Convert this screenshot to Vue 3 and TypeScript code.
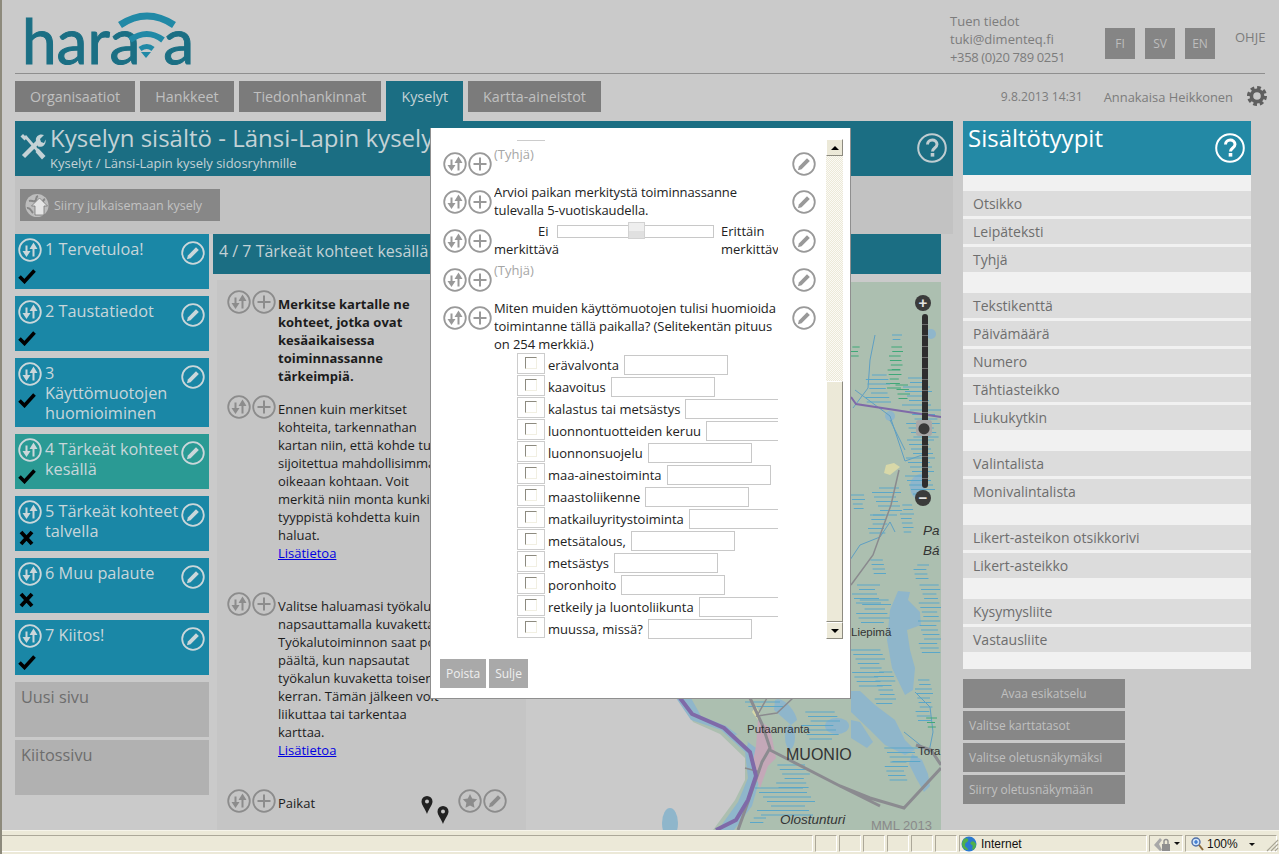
<script setup lang="ts">
interface Page {
  title: string
  done: boolean
  active?: boolean
}

interface Option {
  label: string
}

const tabs = ['Organisaatiot', 'Hankkeet', 'Tiedonhankinnat', 'Kyselyt', 'Kartta-aineistot']
const langs = ['FI', 'SV', 'EN']

const pages: Page[] = [
  { title: '1 Tervetuloa!', done: true },
  { title: '2 Taustatiedot', done: true },
  { title: '3 Käyttömuotojen huomioiminen', done: true },
  { title: '4 Tärkeät kohteet kesällä', done: true, active: true },
  { title: '5 Tärkeät kohteet talvella', done: false },
  { title: '6 Muu palaute', done: false },
  { title: '7 Kiitos!', done: true },
]

const typeGroups = [
  ['Otsikko', 'Leipäteksti', 'Tyhjä'],
  ['Tekstikenttä', 'Päivämäärä', 'Numero', 'Tähtiasteikko', 'Liukukytkin'],
  ['Valintalista', 'Monivalintalista'],
  ['Likert-asteikon otsikkorivi', 'Likert-asteikko'],
  ['Kysymysliite', 'Vastausliite'],
]

const sideButtons = ['Valitse karttatasot', 'Valitse oletusnäkymäksi', 'Siirry oletusnäkymään']

const options: Option[] = [
  'erävalvonta',
  'kaavoitus',
  'kalastus tai metsästys',
  'luonnontuotteiden keruu',
  'luonnonsuojelu',
  'maa-ainestoiminta',
  'maastoliikenne',
  'matkailuyritystoiminta',
  'metsätalous,',
  'metsästys',
  'poronhoito',
  'retkeily ja luontoliikunta',
  'muussa, missä?',
].map((label) => ({ label }))

// wetland hatching on the map: x, y, width, height, colour
const clusters: [number, number, number, number, string][] = [
  [892, 335, 10, 6, '#5aa7c9'],
  [850, 347, 10, 12, '#3fa878'],
  [889, 347, 14, 26, '#3fa878'],
  [886, 370, 16, 20, '#3fa878'],
  [895, 385, 15, 14, '#3fa878'],
  [865, 375, 26, 28, '#5aa7c9'],
  [902, 378, 30, 30, '#5aa7c9'],
  [905, 410, 36, 30, '#5aa7c9'],
  [905, 440, 30, 56, '#5aa7c9'],
  [851, 495, 14, 16, '#5aa7c9'],
  [872, 488, 30, 30, '#5aa7c9'],
  [900, 505, 14, 28, '#5aa7c9'],
  [868, 515, 20, 22, '#5aa7c9'],
  [870, 560, 16, 16, '#5aa7c9'],
  [913, 565, 16, 14, '#5aa7c9'],
  [851, 585, 30, 20, '#5aa7c9'],
  [855, 600, 36, 26, '#5aa7c9'],
  [918, 585, 23, 70, '#5aa7c9'],
  [851, 650, 34, 40, '#5aa7c9'],
  [874, 672, 22, 34, '#5aa7c9'],
  [915, 680, 18, 44, '#5aa7c9'],
  [925, 718, 12, 10, '#3fa878'],
  [883, 748, 40, 14, '#5aa7c9'],
  [884, 762, 24, 20, '#5aa7c9'],
  [735, 702, 50, 6, '#5aa7c9'],
  [800, 712, 40, 28, '#5aa7c9'],
  [775, 765, 36, 24, '#5aa7c9'],
  [755, 788, 60, 28, '#5aa7c9'],
  [750, 818, 16, 8, '#5aa7c9'],
]

const hatches = clusters.flatMap(([x, y, w, h, colour], c) => {
  const lines = []
  for (let i = 0; i * 4.5 < h; i++) {
    const inset = ((c * 7 + i * 11) % 9) * (w / 30)
    lines.push({ x1: x + inset, x2: x + w - ((c + i * 5) % 7) * (w / 30), y: y + i * 4.5, colour })
  }
  return lines
})
</script>

<template>
  <div class="window">
    <svg class="defs" width="0" height="0" aria-hidden="true">
      <symbol id="ic-move" viewBox="0 0 24 24">
        <circle cx="12" cy="12" r="10.8" fill="none" stroke="currentColor" stroke-width="1.8" />
        <path d="M8.5 7.500v7M15.500 10v8.500" stroke="currentColor" stroke-width="2" />
        <path d="M4.500 13h8l-4 6zM11.500 11h8l-4-6.500z" fill="currentColor" />
      </symbol>
      <symbol id="ic-plus" viewBox="0 0 24 24">
        <circle cx="12" cy="12" r="10.8" fill="none" stroke="currentColor" stroke-width="1.8" />
        <path d="M12 5.500v13M5.500 12h13" stroke="currentColor" stroke-width="2" />
      </symbol>
      <symbol id="ic-edit" viewBox="0 0 24 24">
        <circle cx="12" cy="12" r="10.8" fill="none" stroke="currentColor" stroke-width="1.8" />
        <path d="M15 6.200l2.800 2.800L9.600 17.200l-3.700 1 1-3.800z" fill="currentColor" />
      </symbol>
      <symbol id="ic-star" viewBox="0 0 24 24">
        <circle cx="12" cy="12" r="10.8" fill="none" stroke="currentColor" stroke-width="1.8" />
        <path d="M12 5l2.200 4.600 5 .7-3.600 3.500.9 5L12 16.400l-4.500 2.400.9-5-3.600-3.500 5-.7z" fill="currentColor" />
      </symbol>
      <symbol id="ic-help" viewBox="0 0 30 30">
        <circle cx="15" cy="15" r="13.800" fill="none" stroke="currentColor" stroke-width="2" />
        <path d="M10.500 11.500c0-6 9.500-6 9.500-.2 0 3.700-4.500 3.700-4.500 7.200" fill="none" stroke="currentColor" stroke-width="3" />
        <rect x="13.700" y="20" width="3.600" height="3.600" fill="currentColor" />
      </symbol>
      <symbol id="ic-pin" viewBox="0 0 12 18">
        <path fill-rule="evenodd" d="M6 0a5.500 5.500 0 0 1 5.500 5.500C11.500 9 8 12.500 6 18 4 12.500.5 9 .5 5.500A5.500 5.500 0 0 1 6 0zm0 3.500a2 2 0 1 0 0 4 2 2 0 0 0 0-4z" fill="currentColor" />
      </symbol>
    </svg>

    <div class="main">
      <header class="top">
        <div class="logo">
          <span class="logo-text">hara<span class="logo-gap" />a</span>
          <svg class="logo-wifi" width="62" height="48" viewBox="0 0 62 48">
            <g fill="none" stroke="#2189a6">
              <path d="M4 14Q31-4 58 14" stroke-width="7" />
              <path d="M14 29Q31 17 47 29" stroke-width="6" />
              <path d="M24 38Q31 33 37 38" stroke-width="5" />
            </g>
            <path d="M25 41h10l-5 6z" fill="#2189a6" />
          </svg>
        </div>
        <div class="support">
          <div>Tuen tiedot</div>
          <div>tuki@dimenteq.fi</div>
          <div class="phone">+358 (0)20 789 0251</div>
        </div>
        <div class="langs">
          <span v-for="lang in langs" :key="lang" class="lang">{{ lang }}</span>
        </div>
        <span class="help-link">OHJE</span>
      </header>

      <nav class="nav">
        <span
          v-for="tab in tabs"
          :key="tab"
          class="tab"
          :class="{ current: tab === 'Kyselyt' }"
        >{{ tab }}</span>
        <span class="stamp">9.8.2013 14:31</span>
        <span class="user">Annakaisa Heikkonen</span>
        <svg class="gear" width="20" height="20" viewBox="0 0 20 20">
          <circle cx="10" cy="10" r="8.300" fill="none" stroke="#5f5f5f" stroke-width="3.400" stroke-dasharray="3.700 2.800" />
          <circle cx="10" cy="10" r="5.600" fill="none" stroke="#5f5f5f" stroke-width="3.600" />
        </svg>
      </nav>

      <div class="columns">
        <section class="editor">
          <div class="title-bar">
            <svg class="tools-icon" width="26" height="27" viewBox="0 0 26 27">
              <path d="M5 3l13 15" stroke="#c4d2d6" stroke-width="2.800" />
              <path d="M15.500 19l3-3.500 7 7.500-3.500 3.500z" fill="#c4d2d6" />
              <path d="M3.500 23.500L19 8" stroke="#c4d2d6" stroke-width="4.500" />
              <path d="M16 8c-1-4 3-8 8-6l-4 4 1 3 3 1 1.500-3.500c1 5-3 8.500-7.500 7z" fill="#c4d2d6" />
              <path d="M0.500 3.500L3 1l4 4-2.500 2.500z" fill="#c4d2d6" />
            </svg>
            <div class="title-text">
              <h1>Kyselyn sisältö - Länsi-Lapin kysely sidosryhmille</h1>
              <div class="crumb">Kyselyt / Länsi-Lapin kysely sidosryhmille</div>
            </div>
            <svg class="help-icon dim" width="30" height="30"><use href="#ic-help" /></svg>
          </div>

          <div class="publish-strip">
            <button class="publish" type="button">
              <svg width="24" height="25" viewBox="0 0 24 25">
                <circle cx="12" cy="12.500" r="11.500" fill="#bdbdbd" />
                <path d="M4 8c3-1 4 1 6 0s0-4 3-5M2 15c3-1 4 3 6 5M20 6c-2 1-3 3-1 5" fill="none" stroke="#878787" stroke-width="2" />
                <path d="M14.500 5l8 8h-3.500v9h-9v-9H6.500z" fill="#e4e4e4" stroke="#777" stroke-width=".8" />
              </svg>
              Siirry julkaisemaan kysely
            </button>
          </div>

          <div class="work">
            <aside class="pages">
              <div
                v-for="page in pages"
                :key="page.title"
                class="page"
                :class="{ active: page.active }"
              >
                <div class="page-side">
                  <svg class="ico" width="24" height="24"><use href="#ic-move" /></svg>
                  <svg v-if="page.done" class="mark" width="18" height="16" viewBox="0 0 18 16">
                    <path d="M1.500 8.500l5 5L16.500 2.500" fill="none" stroke="#000" stroke-width="3.600" />
                  </svg>
                  <svg v-else class="mark" width="18" height="16" viewBox="0 0 18 16">
                    <path d="M3 2l11 12M14 2L3 14" fill="none" stroke="#000" stroke-width="3.800" />
                  </svg>
                </div>
                <div class="page-title">{{ page.title }}</div>
                <svg class="ico page-edit" width="24" height="24"><use href="#ic-edit" /></svg>
              </div>
              <div class="page blank">Uusi sivu</div>
              <div class="page blank">Kiitossivu</div>
            </aside>

            <div class="page-view">
              <div class="page-head">4 / 7 Tärkeät kohteet kesällä</div>
              <div class="page-body">
                <div class="blocks">
                  <div class="block first">
                    <div class="tools">
                      <svg width="24" height="24"><use href="#ic-move" /></svg>
                      <svg width="24" height="24"><use href="#ic-plus" /></svg>
                    </div>
                    <div class="copy strong">Merkitse kartalle ne kohteet, jotka ovat kesäaikaisessa toiminnassanne tärkeimpiä.</div>
                  </div>
                  <div class="block second">
                    <div class="tools">
                      <svg width="24" height="24"><use href="#ic-move" /></svg>
                      <svg width="24" height="24"><use href="#ic-plus" /></svg>
                    </div>
                    <div class="copy">
                      Ennen kuin merkitset kohteita, tarkennathan kartan niin, että kohde tulee sijoitettua mahdollisimman oikeaan kohtaan. Voit merkitä niin monta kunkin tyyppistä kohdetta kuin haluat.
                      <a href="#">Lisätietoa</a>
                    </div>
                  </div>
                  <div class="block third">
                    <div class="tools">
                      <svg width="24" height="24"><use href="#ic-move" /></svg>
                      <svg width="24" height="24"><use href="#ic-plus" /></svg>
                    </div>
                    <div class="copy">
                      Valitse haluamasi työkalu napsauttamalla kuvaketta. Työkalutoiminnon saat pois päältä, kun napsautat työkalun kuvaketta toisen kerran. Tämän jälkeen voit liikuttaa tai tarkentaa karttaa.
                      <a href="#">Lisätietoa</a>
                    </div>
                  </div>
                  <div class="block places">
                    <div class="tools">
                      <svg width="24" height="24"><use href="#ic-move" /></svg>
                      <svg width="24" height="24"><use href="#ic-plus" /></svg>
                    </div>
                    <div class="place-label">Paikat</div>
                    <svg class="pin" width="12" height="18"><use href="#ic-pin" /></svg>
                    <svg class="pin low" width="12" height="18"><use href="#ic-pin" /></svg>
                    <svg class="place-tool" width="24" height="24"><use href="#ic-star" /></svg>
                    <svg class="place-tool" width="24" height="24"><use href="#ic-edit" /></svg>
                  </div>
                </div>

                <div class="map">
                  <svg width="415" height="548" viewBox="526 282 415 548">
                    <rect x="526" y="282" width="415" height="548" fill="#cacaca" />
                    <path d="M670 282H941V830H713l22-30 10-20v-22l-25-24-27-12-15-30z" fill="#acbfb0" />
                    <!-- rivers and lakes -->
                    <path d="M676 698l15 22 30 10 24 22 3 26-10 24-20 28h16l18-24 8-28-4-30-30-22-25-10-10-18z" fill="#8fb6cb" />
                    <path d="M898 591l12 1-2 8 12 12 1 13-14 5 3 20 5 18-2 22-8 5-13-27-5-28 3-30z" fill="#8fb6cb" />
                    <path d="M851 691h9l15 14 20 15 10 20 10 10-10 5-20-10-15-15-19-18z" fill="#8fb6cb" />
                    <path d="M851 720l9 2 13 20-6 6-16-10z" fill="#8fb6cb" />
                    <path d="M912 754l10 6 6 14 2 12-6 6-8-14-7-14z" fill="#8fb6cb" />
                    <path d="M910 486c0-10 10-13 15-13v29c-8 0-15-6-15-16z" fill="#8fb6cb" />
                    <circle cx="890" cy="416" r="5" fill="#8fb6cb" />
                    <circle cx="931" cy="334" r="5" fill="#8fb6cb" />
                    <ellipse cx="670" cy="823" rx="8" ry="15" fill="#8fb6cb" />
                    <ellipse cx="837" cy="726" rx="12" ry="8" fill="#8fb6cb" />
                    <ellipse cx="790" cy="737" rx="5" ry="12" fill="#8fb6cb" />
                    <path d="M775 700c8-4 20 10 22 20l-6 5-17-15z" fill="#8fb6cb" />
                    <path d="M735 735l6 10 5 4 2-6-6-10z" fill="#acbfb0" />
                    <g fill="none" stroke="#5f9fc3" stroke-width="1">
                      <path d="M875 335l-5 25-2 28-15 20M855 390l35 26 15 45 20-7M890 420l15 30M850 560l10-15 20-8 10-15 5 10M915 692l15 15 3 25-4 20-25-20" />
                    </g>
                    <line
                      v-for="(h, i) in hatches"
                      :key="i"
                      :x1="h.x1"
                      :x2="h.x2"
                      :y1="h.y"
                      :y2="h.y"
                      :stroke="h.colour"
                      stroke-width="1"
                    />
                    <!-- town -->
                    <path d="M758 720l12 8 6 30-8 8-8 22-8-22 4-20z" fill="#c4a8b8" />
                    <path d="M752 712l6 8 2-6-4-8z" fill="#d8d8a8" />
                    <path d="M886 465l8-2 6 4-10 8-6-2z" fill="#d8d8a8" />
                    <!-- roads -->
                    <g fill="none" stroke="#8a8a8e" stroke-width="1.500">
                      <path d="M767 698l-10 18 20-3 16-15M899 470l-8 35-18 50-22 30M745 768l15 4" />
                    </g>
                    <g fill="none" stroke="#8b8b90" stroke-width="3">
                      <path d="M750 698l12 26 8 24-8 14-14 40-10 28M770 750l70 36 40 20M840 786l30 12 34 10 37-40M941 765l-10-15-15-5" />
                    </g>
                    <path d="M680 698l12 16 32 14 26 24 6 24-8 24-12 20-20 10" fill="none" stroke="#7f6aa8" stroke-width="4" />
                    <path d="M851 397l5 7 85 13" fill="none" stroke="#7f6aa8" stroke-width="2" />
                    <text class="map-label" x="851" y="636">Liepimä</text>
                    <text class="map-label" x="747" y="733">Putaanranta</text>
                    <text class="map-label big" x="786" y="760">MUONIO</text>
                    <text class="map-label" x="918" y="755">Tora</text>
                    <text class="map-label it" x="923" y="535">Pa</text>
                    <text class="map-label it" x="923" y="555">Bá</text>
                    <text class="map-label it" x="780" y="824">Olostunturi</text>
                    <text class="map-label mml" x="871" y="830">MML 2013</text>
                  </svg>
                  <div class="zoom-bar">
                    <span class="zoom-btn">+</span>
                    <span class="zoom-track" />
                    <span class="zoom-thumb" />
                    <span class="zoom-btn minus">−</span>
                  </div>
                </div>
              </div>
            </div>
          </div>
        </section>

        <aside class="types">
          <div class="types-head">
            <h2>Sisältötyypit</h2>
            <svg class="help-icon" width="30" height="30"><use href="#ic-help" /></svg>
          </div>
          <div class="types-list">
            <div v-for="(group, g) in typeGroups" :key="g" class="type-group">
              <div v-for="item in group" :key="item" class="type-item">{{ item }}</div>
            </div>
          </div>
          <div class="side-buttons">
            <div class="side-btn preview">Avaa esikatselu</div>
            <div v-for="label in sideButtons" :key="label" class="side-btn">{{ label }}</div>
          </div>
        </aside>
      </div>
    </div>

    <footer class="status">
      <span class="cell grow" />
      <span class="cell small" />
      <span class="cell small" />
      <span class="cell small" />
      <span class="cell small" />
      <span class="cell small" />
      <span class="cell small" />
      <span class="cell zone">
        <svg width="16" height="16" viewBox="0 0 16 16">
          <circle cx="8" cy="8" r="7.500" fill="#2a79cf" />
          <path d="M3 3c3-2 5 0 4 2S4 6 4 9s3 2 3 5c-3 0-6-2-6-6 0-2 1-4 2-5zM10 6c2-2 4 0 5 2 0 3-1 5-3 6-2-2 1-4-1-5s-2-2-1-3z" fill="#4fb04a" />
        </svg>
        Internet
      </span>
      <span class="cell lock">
        <svg width="18" height="16" viewBox="0 0 18 16">
          <path d="M1 9l6-7 2 2-3 4 3 6-2 1z" fill="#a8a8a8" />
          <rect x="9" y="8" width="8" height="7" fill="#8f8f8f" />
          <path d="M11 8V5.500a2 2 0 0 1 4 0V8" fill="none" stroke="#8f8f8f" stroke-width="1.400" />
        </svg>
        <i class="caret" />
      </span>
      <span class="cell zoom">
        <svg width="13" height="14" viewBox="0 0 13 14">
          <circle cx="5" cy="5" r="4" fill="#cfe3f8" stroke="#4f6fa8" stroke-width="1.400" />
          <path d="M3 5h4M5 3v4" stroke="#2468c8" stroke-width="1.200" />
          <path d="M8 8l4 5" stroke="#8a6a3a" stroke-width="2" />
        </svg>
        100%
        <i class="caret far" />
      </span>
      <svg class="grip" width="14" height="14" viewBox="0 0 14 14">
        <path d="M13 2L2 13M13 6L6 13M13 10l-3 3" stroke="#a8a595" stroke-width="1.200" />
      </svg>
    </footer>

    <div class="dialog">
      <div class="dialog-main">
        <div class="scroll-pane">
          <div class="stub" />
          <div class="row">
            <div class="tools">
              <svg width="24" height="24"><use href="#ic-move" /></svg>
              <svg width="24" height="24"><use href="#ic-plus" /></svg>
            </div>
            <div class="row-content muted">(Tyhjä)</div>
            <svg class="row-edit" width="24" height="24"><use href="#ic-edit" /></svg>
          </div>
          <div class="row tall">
            <div class="tools">
              <svg width="24" height="24"><use href="#ic-move" /></svg>
              <svg width="24" height="24"><use href="#ic-plus" /></svg>
            </div>
            <div class="row-content question">Arvioi paikan merkitystä toiminnassanne tulevalla 5-vuotiskaudella.</div>
            <svg class="row-edit" width="24" height="24"><use href="#ic-edit" /></svg>
          </div>
          <div class="row tall">
            <div class="tools">
              <svg width="24" height="24"><use href="#ic-move" /></svg>
              <svg width="24" height="24"><use href="#ic-plus" /></svg>
            </div>
            <div class="row-content scale">
              <div class="scale-low"><div>Ei</div>merkittävä</div>
              <div class="slider"><span class="slider-handle" /></div>
              <div class="scale-high">Erittäin<br>merkittävä</div>
            </div>
            <svg class="row-edit" width="24" height="24"><use href="#ic-edit" /></svg>
          </div>
          <div class="row">
            <div class="tools">
              <svg width="24" height="24"><use href="#ic-move" /></svg>
              <svg width="24" height="24"><use href="#ic-plus" /></svg>
            </div>
            <div class="row-content muted">(Tyhjä)</div>
            <svg class="row-edit" width="24" height="24"><use href="#ic-edit" /></svg>
          </div>
          <div class="row">
            <div class="tools">
              <svg width="24" height="24"><use href="#ic-move" /></svg>
              <svg width="24" height="24"><use href="#ic-plus" /></svg>
            </div>
            <div class="row-content question">
              Miten muiden käyttömuotojen tulisi huomioida toimintanne tällä paikalla? (Selitekentän pituus on 254 merkkiä.)
              <div v-for="opt in options" :key="opt.label" class="option">
                <span class="check-cell"><span class="check" /></span>
                <span class="option-label">{{ opt.label }}</span>
                <span class="option-input" />
              </div>
            </div>
            <svg class="row-edit" width="24" height="24"><use href="#ic-edit" /></svg>
          </div>
        </div>
        <div class="scrollbar">
          <span class="sb-btn"><i class="arrow up" /></span>
          <span class="sb-track" />
          <span class="sb-thumb" />
          <span class="sb-btn"><i class="arrow" /></span>
        </div>
      </div>
      <div class="dialog-foot">
        <button type="button">Poista</button>
        <button type="button">Sulje</button>
      </div>
    </div>
  </div>
</template>

<style scoped>
.window {
  position: relative;
  display: flex;
  flex-direction: column;
  width: 1279px;
  height: 854px;
  box-sizing: border-box;
  overflow: hidden;
  border-left: 2px solid #8d8a7c;
  background: #cacaca;
  font-family: "Open Sans", "Liberation Sans", sans-serif;
  font-size: 13px;
  color: #222;
}

.defs {
  position: absolute;
}

.main {
  height: 830px;
  flex: none;
  overflow: hidden;
  padding-left: 13px;
}

/* top */
.top {
  display: flex;
  width: 1250px;
  height: 74px;
  box-sizing: border-box;
  border-bottom: 1px solid #8f8f8f;
}

.logo {
  position: relative;
  flex: none;
  width: 176px;
  height: 72px;
  margin-left: 10px;
}

.logo-text {
  position: absolute;
  left: -3px;
  top: 4px;
  display: flex;
  font-family: Lato, sans-serif;
  font-size: 62px;
  line-height: 72px;
  color: #1b6f84;
  -webkit-text-stroke: 1px #1b6f84;
}

.logo-gap {
  width: 23px;
}

.logo-wifi {
  position: absolute;
  left: 91px;
  top: 11px;
}

.support {
  flex: none;
  width: 155px;
  margin-left: 749px;
  margin-top: 12px;
  font-size: 13px;
  line-height: 18px;
  color: #7c7c7c;
  white-space: nowrap;
}

.phone {
  letter-spacing: -0.36px;
}

.langs {
  display: flex;
  flex: none;
  gap: 10px;
  margin-top: 28px;
}

.lang {
  width: 30px;
  height: 31px;
  background: #858585;
  color: #bdbdbd;
  font-size: 12px;
  line-height: 31px;
  text-align: center;
}

.help-link {
  flex: none;
  margin-left: 20px;
  margin-top: 28px;
  color: #7c7c7c;
  font-size: 13px;
  line-height: 18px;
}

/* nav */
.nav {
  display: flex;
  align-items: flex-start;
  gap: 5px;
  width: 1252px;
  height: 40px;
  margin-top: 7px;
}

.tab {
  height: 31px;
  padding: 0 15px;
  background: #7b7b7b;
  color: #c0c0c0;
  font-size: 14.300px;
  line-height: 31px;
}

.tab.current {
  height: 40px;
  background: #1b6e83;
  color: #c4d2d6;
}

.stamp {
  margin-left: auto;
  margin-top: 7px;
  color: #7c7c7c;
  font-size: 12.100px;
  line-height: 18px;
}

.user {
  margin-left: 16px;
  margin-top: 7px;
  color: #7c7c7c;
  font-size: 12.900px;
  line-height: 18px;
}

.gear {
  margin-left: 9px;
  margin-top: 5px;
}

.columns {
  display: flex;
  gap: 10px;
}

/* editor column */
.editor {
  width: 938px;
}

.title-bar {
  display: flex;
  height: 55px;
  background: #1b6e83;
  color: #c4d2d6;
}

.tools-icon {
  flex: none;
  margin: 12px 0 0 5px;
}

.title-text {
  flex: 1;
  min-width: 0;
  margin-left: 4px;
}

.title-text h1 {
  margin: 0;
  font-size: 24px;
  font-weight: 400;
  line-height: 34px;
  white-space: nowrap;
}

.crumb {
  font-size: 13px;
  line-height: 16px;
}

.help-icon {
  flex: none;
  margin: 12px 6px 0 0;
  color: #fff;
}

.help-icon.dim {
  color: #c0cdd1;
}

.publish-strip {
  height: 58px;
  box-sizing: border-box;
  padding: 13px 5px 0;
  background: #c2c2c2;
}

.publish {
  display: flex;
  align-items: center;
  gap: 5px;
  width: 200px;
  height: 32px;
  padding: 0 0 0 5px;
  border: 0;
  background: #878787;
  color: #c2c2c2;
  font: 12.500px "Open Sans", sans-serif;
  white-space: nowrap;
}

.work {
  display: flex;
  gap: 4px;
}

.pages {
  display: flex;
  flex: none;
  flex-direction: column;
  width: 194px;
}

.page {
  display: flex;
  min-height: 55px;
  box-sizing: border-box;
  margin-bottom: 7px;
  padding: 4px 4px 4px 3px;
  background: #1a87a6;
  color: #c8d6da;
}

.page.active {
  background: #2a9a94;
}

.page-side {
  display: flex;
  flex: none;
  flex-direction: column;
  gap: 5px;
  width: 27px;
}

.ico {
  flex: none;
  color: #cbd7da;
}

.mark {
  margin-top: 1px;
}

.page-title {
  flex: 1;
  min-width: 0;
  padding: 1px 25.500px 0 0;
  font-size: 16.300px;
  line-height: 20px;
}

.page-edit {
  margin-top: 3px;
  margin-left: -24px;
}

.page.blank {
  display: block;
  margin-bottom: 3px;
  padding: 5px 6px;
  background: #b1b1b1;
  color: #6d6d6d;
  font-size: 16.300px;
  line-height: 20px;
}

.page-view {
  width: 728px;
}

.page-head {
  height: 40px;
  box-sizing: border-box;
  padding-left: 6px;
  background: #1b6e83;
  color: #c4d2d6;
  font-size: 16px;
  line-height: 34px;
  white-space: nowrap;
}

.page-body {
  display: flex;
  height: 556px;
  box-sizing: border-box;
  margin-left: 4px;
  padding-top: 6px;
  overflow: hidden;
}

.blocks {
  flex: none;
  width: 309px;
  box-sizing: border-box;
  padding-left: 10px;
  background: #c5c5c5;
  line-height: 18px;
  color: #1c1c1c;
}

.block {
  display: flex;
}

.block.first {
  padding-top: 10px;
  height: 115px;
  box-sizing: border-box;
}

.block.second {
  height: 197px;
}

.block.third {
  height: 197px;
}

.tools {
  display: flex;
  flex: none;
  gap: 1px;
  width: 51px;
  color: #8c8c8c;
}

.copy {
  width: 175px;
  flex: none;
  margin-top: 5px;
}

.copy.strong {
  font-weight: 700;
  width: 150px;
}

.copy a {
  display: block;
  color: #0000e0;
}

.place-label {
  width: 143px;
  flex: none;
  margin-top: 5px;
}

.pin {
  flex: none;
  margin-top: 7px;
  color: #222;
}

.pin.low {
  margin-top: 17px;
  margin-left: 4px;
}

.place-tool {
  flex: none;
  margin-left: 1px;
  color: #8c8c8c;
}

.pin.low + .place-tool {
  margin-left: 9px;
}

.map {
  position: relative;
  flex: none;
  width: 415px;
  height: 548px;
  margin-top: 2px;
}

.map > svg {
  display: block;
}

.map-label {
  font-family: "Liberation Sans", sans-serif;
  font-size: 11.500px;
  fill: #333;
}

.map-label.big {
  font-size: 16px;
}

.map-label.it {
  font-size: 13.500px;
  font-style: italic;
}

.map-label.mml {
  fill: #8a8a8a;
  font-size: 13px;
}

.zoom-bar {
  position: absolute;
  left: 389px;
  top: 13px;
  display: flex;
  flex-direction: column;
  align-items: center;
  width: 16px;
  height: 212px;
}

.zoom-btn {
  width: 16px;
  height: 16px;
  border-radius: 50%;
  background: #3b3b3b;
  color: #e4e4e4;
  font: 700 15px/15px "Liberation Sans", sans-serif;
  text-align: center;
}

.zoom-track {
  width: 6px;
  height: 174px;
  margin: 3px 0 0 3px;
  border-radius: 3px;
  background: repeating-linear-gradient(#2e2e2e 0 10px, #6c6c6c 10px 11px);
}

.zoom-btn.minus {
  margin-top: 2px;
}

.zoom-thumb {
  position: absolute;
  left: 1px;
  top: 125px;
  width: 16px;
  height: 16px;
  border-radius: 3px;
  background: radial-gradient(circle at 50% 55%, #3a3a3a 0 5px, #a8a8a8 6px);
}

/* right column */
.types {
  width: 288px;
}

.types-head {
  display: flex;
  justify-content: space-between;
  height: 54px;
  background: #2389a5;
  color: #fff;
}

.types-head h2 {
  margin: 0 0 0 5px;
  font-size: 24px;
  font-weight: 400;
  line-height: 34px;
}

.types-list {
  height: 494px;
  box-sizing: border-box;
  padding-top: 16px;
  background: #f1f1f1;
}

.type-group {
  margin-bottom: 21px;
}

.type-item {
  height: 25px;
  margin-bottom: 3px;
  padding-left: 10px;
  background: #dcdcdc;
  color: #6e6e6e;
  font-size: 14px;
  line-height: 25px;
}

.side-buttons {
  display: flex;
  flex-direction: column;
  gap: 3px;
  width: 162px;
  margin-top: 10px;
}

.side-btn {
  height: 29px;
  padding-left: 6px;
  background: #878787;
  color: #c0c0c0;
  font-size: 12px;
  line-height: 29px;
  white-space: nowrap;
}

.side-btn.preview {
  padding-left: 38px;
}

/* status bar */
.status {
  position: relative;
  display: flex;
  gap: 2px;
  flex: none;
  height: 24px;
  box-sizing: border-box;
  padding: 4px 0 3px;
  border-top: 1px solid #f6f4ea;
  background: #ece9d8;
  font-family: "Liberation Sans", sans-serif;
  font-size: 12px;
  color: #111;
}

.cell {
  display: flex;
  align-items: center;
  box-sizing: border-box;
  height: 17px;
  border-top: 1px solid #aca899;
  border-left: 1px solid #aca899;
  border-right: 1px solid #fff;
  border-bottom: 1px solid #fff;
}

.cell.grow {
  width: 811px;
  border-left: 0;
}

.cell.small {
  width: 22px;
}

.cell.zone {
  gap: 4px;
  width: 188px;
  padding-left: 1px;
}

.cell.lock {
  gap: 3px;
  width: 34px;
  padding-left: 3px;
}

.cell.zoom {
  position: relative;
  gap: 3px;
  width: 92px;
  padding-left: 5px;
}

.caret {
  display: block;
  width: 0;
  height: 0;
  border: 3px solid transparent;
  border-top: 3px solid #111;
  border-bottom: 0;
}

.caret.far {
  position: absolute;
  left: 63px;
  top: 7px;
}

.grip {
  position: absolute;
  right: 0;
  bottom: 2px;
}

/* dialog */
.dialog {
  position: absolute;
  left: 428px;
  top: 128px;
  display: flex;
  flex-direction: column;
  width: 421px;
  height: 571px;
  box-sizing: border-box;
  border-right: 1px solid #8f8f8f;
  border-bottom: 1px solid #8f8f8f;
  border-left: 1px solid #8f8f8f;
  background: #fff;
  padding: 11px 0 0 9px;
}

.dialog-main {
  position: relative;
  display: flex;
  height: 500px;
}

.scroll-pane {
  width: 386px;
  height: 500px;
  overflow: hidden;
  box-sizing: border-box;
  padding-left: 3px;
  line-height: 18px;
  color: #222;
}

.stub {
  width: 28px;
  height: 1px;
  margin: 1px 0 11px 74px;
  background: #ccc;
}

.row {
  display: flex;
  min-height: 38px;
}

.row.tall {
  min-height: 39px;
}

.row .tools {
  color: #999;
}

.row-content {
  flex: none;
  width: 284px;
  margin-top: -7px;
  overflow: hidden;
}

.row-content.muted {
  color: #a6a6a6;
}

.row-content.question {
  letter-spacing: -0.08px;
}

.row-edit {
  flex: none;
  margin-left: 14px;
  color: #999;
}

.scale {
  display: flex;
}

.scale-low {
  flex: none;
  width: 63px;
  white-space: nowrap;
}

.scale-low div {
  padding-left: 44px;
}

.slider {
  position: relative;
  flex: none;
  width: 157px;
  height: 13px;
  box-sizing: border-box;
  margin-top: 3px;
  border: 1px solid #c8c8c8;
}

.slider-handle {
  position: absolute;
  left: 70px;
  top: -4px;
  width: 17px;
  height: 17px;
  box-sizing: border-box;
  border: 1px solid #d2d2d2;
  background: linear-gradient(#eee 50%, #e0e0e0 50%);
}

.scale-high {
  flex: none;
  margin-left: 7px;
  white-space: nowrap;
}

.option {
  display: flex;
  height: 22px;
  margin-left: 23px;
  letter-spacing: 0;
  white-space: nowrap;
}

.check-cell {
  flex: none;
  width: 28px;
  height: 21px;
  box-sizing: border-box;
  padding: 3px 0 0 7px;
  border: 1px solid #ccc;
}

.check {
  display: block;
  width: 12px;
  height: 12px;
  box-sizing: border-box;
  border: 1px solid #f1efe2;
  border-top-color: #8d8b80;
  border-left-color: #8d8b80;
}

.option-label {
  flex: none;
  margin-left: 3px;
  line-height: 24px;
}

.option-input {
  flex: none;
  width: 104px;
  height: 20px;
  box-sizing: border-box;
  margin: 2px 0 0 5px;
  border: 1px solid #c8c8c8;
}

.scrollbar {
  position: relative;
  display: flex;
  flex-direction: column;
  flex: none;
  width: 17px;
  height: 500px;
}

.sb-btn {
  display: flex;
  align-items: center;
  justify-content: center;
  flex: none;
  height: 17px;
  box-sizing: border-box;
  border: 1px solid;
  border-color: #fff #8d8b80 #8d8b80 #fff;
  background: #ece9d8;
}

.sb-track {
  flex: 1;
  background: repeating-conic-gradient(#ece9d8 0 25%, #fbfaf5 0 50%) 0 0 / 2px 2px;
}

.sb-thumb {
  position: absolute;
  left: 0;
  top: 242px;
  width: 17px;
  height: 241px;
  box-sizing: border-box;
  border: 1px solid;
  border-color: #fff #8d8b80 #8d8b80 #fff;
  background: #ece9d8;
}

.arrow {
  display: block;
  width: 0;
  height: 0;
  border: 4px solid transparent;
  border-top: 4px solid #000;
  border-bottom: 0;
}

.arrow.up {
  border-top: 0;
  border-bottom: 4px solid #000;
}

.dialog-foot {
  display: flex;
  gap: 3px;
  margin-top: 20px;
}

.dialog-foot button {
  height: 29px;
  padding: 0 6px;
  border: 0;
  background: #a9a9a9;
  color: #efefef;
  font: 12px "Open Sans", sans-serif;
}
</style>

<style>
html,
body {
  margin: 0;
  background: #cacaca;
}
</style>
